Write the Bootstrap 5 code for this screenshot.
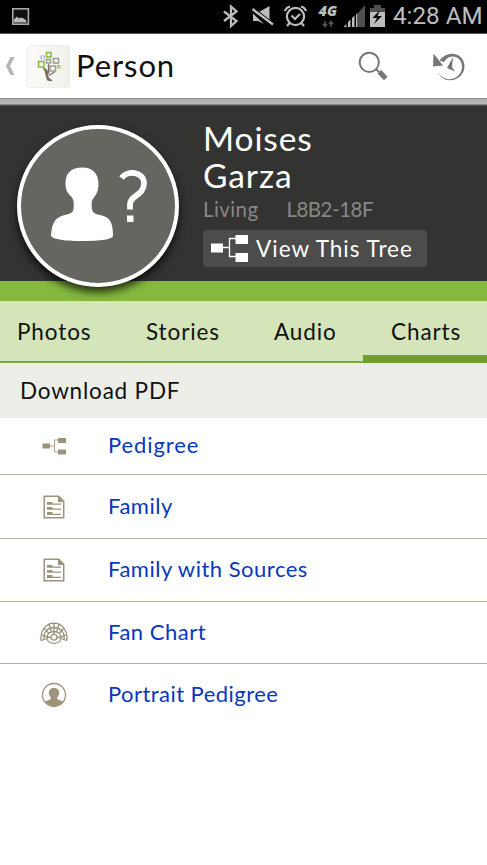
<!DOCTYPE html>
<html lang="en">
<head>
<meta charset="utf-8">
<meta name="viewport" content="width=device-width, initial-scale=1">
<title>Person</title>
<link href="https://cdn.jsdelivr.net/npm/bootstrap@5.3.0/dist/css/bootstrap.min.css" rel="stylesheet">
<style>
body{font-family:Lato,"Open Sans",sans-serif;font-size:22.5px;line-height:30px;color:#111;background:#fff;height:865px;overflow:hidden}
svg{display:block;flex:none}
.status-bar{height:34px;background:#000;border-bottom:1px solid #555}
.clock{font:24.2px/32px Roboto,sans-serif;color:#bebebe;white-space:nowrap;margin-left:8px}
.app-bar{height:64px;background:#fff}
.app-title{font-size:31px;line-height:62px;letter-spacing:.9px;margin-left:5px}
.strip{height:8px;background:linear-gradient(#8d8e8a 0 1px,#aaaba6 1px,#bbbcb7 6px,#51524e 7px)}
.hero{height:175px;background:#333331}
.avatar{width:162px;height:162px;margin:19px 0 0 17px;border:4px solid #fff;background:#666661;box-shadow:0 5px 9px rgba(0,0,0,.75);z-index:2}
.facts{margin:14px 0 0 24px}
.full-name{font-size:33.5px;line-height:37px;letter-spacing:.9px;color:#fff}
.meta{font-size:20.5px;line-height:30px;color:#888885;letter-spacing:.4px;gap:28px}
.person-id{letter-spacing:-.5px}
.tree-btn{width:224px;height:37px;background:#4c4c4b;color:#fff;border-radius:4px;margin-top:6px;letter-spacing:1px;line-height:37px;white-space:nowrap}
.accent{height:20px;background:#85b83f}
.tab-row{height:62px;background:#d4e5b9;border-bottom:2px solid #76ac37;letter-spacing:.9px}
.tab-row .nav-link{color:#111;padding:0;line-height:62px;height:60px;white-space:nowrap}
.tab-row .nav-item:nth-child(1){width:146px;padding-left:17px}
.tab-row .nav-item:nth-child(2){width:128px}
.tab-row .nav-item:nth-child(3){width:89px}
.tab-row .nav-item:nth-child(4){width:124px;height:62px;padding-left:28px;background:linear-gradient(transparent 54px,#6fa02d 54px)}
.section-head{height:55px;background:#eeeee9;padding-left:20px;line-height:55px;letter-spacing:.8px}
.chart-row{height:63px;border-bottom:1px solid #b8b19f;padding-left:40px;color:#0738bd;font-size:22px;letter-spacing:.5px;text-decoration:none}
.chart-row svg{margin-right:40px}
.chart-row span{padding-bottom:2px}
.h57{height:57px;letter-spacing:.9px}.h64{height:64px}.h62{height:62px}
.last-row{height:62px;letter-spacing:.45px}
</style>
<script src="https://cdn.jsdelivr.net/npm/bootstrap@5.3.0/dist/js/bootstrap.bundle.min.js"></script>
</head>
<body>
<div class="status-bar d-flex">
<svg width="223" height="33" viewBox="0 0 223 33"><rect x="12.8" y="8.8" width="15.6" height="15.4" fill="#111" stroke="#aaa" stroke-width="1.6"/><path d="M14 22.5v-3l3-3 2 2 2-1 3 1 2.500 2.500v1.500z" fill="#bbb"/></svg>
<svg width="162" height="33" viewBox="223 0 162 33" fill="#bdbdbd">
<path d="M224 11.500l12.500 9.500-5.500 5V6.500l5.500 5L224 21" fill="none" stroke="#bdbdbd" stroke-width="2.300"/>
<path d="M253 12h6l10.500-6v16.500h-1L253 12zM253 13.500v7.500h5l6 3z"/><path d="M251.500 8.500L273 25" stroke="#000" stroke-width="4.500"/><path d="M252.500 9L273 24.500" stroke="#bdbdbd" stroke-width="2.400"/>
<g fill="none" stroke="#bdbdbd" stroke-width="2.200"><circle cx="295.500" cy="16.500" r="8.600"/><path d="M291.500 15.500l3.500 3.500 5-5M285 11a7 7 0 0 1 5-4.500M301 6.500a7 7 0 0 1 5 4.500M289.500 23l-2.500 3M301.500 23l2.500 3"/></g>
<text x="318.500" y="16" font-family="Open Sans, sans-serif" font-size="13.500" font-weight="800" font-style="italic" textLength="18.500" lengthAdjust="spacingAndGlyphs">4G</text>
<path d="M325 21v5M323 24l2 2.500 2-2.500M331 27v-5M329 24l2-2.500 2 2.500" fill="none" stroke="#555" stroke-width="1.600"/>
<path d="M343.500 27l3-3v3zM348 27v-5l2.500-2.500V27zM352 27v-9l2.500-2.500V27z M356 27V14.500l1.500-1.500V27z"/><path d="M358 27V13l7-8v22z" fill="#505050"/>
<path d="M370 8h4V5h7v3h4v4.500h-15z" fill="#505050"/><path d="M370 12h15v15h-15z"/><path d="M380 10l-7.500 8h4.500l-3 6 8-8h-4.500z" fill="#000"/>
</svg>
<span class="clock">4:28 AM</span>
</div>
<header class="app-bar d-flex">
<svg width="71" height="64" viewBox="0 34 71 64">
<path d="M10.500 57h4L10 66l4.500 9h-4L6 66z" fill="#b4b4b4"/>
<defs><linearGradient id="tile" x2="1"><stop stop-color="#fbfbf9"/><stop offset="1" stop-color="#f1f0eb"/></linearGradient></defs>
<rect x="27.500" y="45.500" width="42" height="42" rx="2.500" fill="url(#tile)" stroke="#eeeeea"/>
<path d="M43.500 68c4 2 4 4 4 7 .5 3 1.500 4.500 4.500 5.500l-4-.3c-3-3-.5-8-4.500-12.200M48.500 64v10M55 71.500l-6 4" fill="#786f60" stroke="#786f60" stroke-width="1.300"/>
<g fill="#f7f7f4" stroke-width="1.500"><g stroke="#84b941"><path d="M46.500 52.500h4.500v4.500h-4.500zM38.500 61.500h5.500v5.500h-5.500z"/><path d="M57.500 65.500h2.500v2.500h-2.500z" stroke-width="1"/></g><path d="M41 56h3.500v3h-3.500z" stroke="#bbb" stroke-width="1.200"/><path d="M46.500 59.500h4v3.500h-4zM53.500 58.500h5v4.500h-5zM50 66h5.500v5h-5.500z" stroke="#9d9b95"/></g>
</svg>
<span class="app-title">Person</span>
<svg class="ms-auto" width="129" height="64" viewBox="358 34 129 64">
<circle cx="369.300" cy="62.300" r="9.600" fill="none" stroke="#777" stroke-width="2"/><path d="M376 69l3 3" stroke="#777" stroke-width="2"/><path d="M379.300 71.800l6.500 6.700" stroke="#777" stroke-width="5"/>
<path d="M439.500 60.500C447 49.500 464 52 464.500 66c0 9-7.500 14.500-15 14.200-5 0-9.500-3-11.300-8 3 5 7 7 11.300 7 7.500-.3 12.500-5.700 12.500-12.700 0-10-12-14.500-18-4.500z" fill="#777"/><path d="M433.500 53.500l-.5 13 10-1z" fill="#777"/><path d="M453 57l-1 10 3 4.500-8-3.500z" fill="#777"/>
</svg>
</header>
<div class="strip"></div>
<section class="hero d-flex align-items-start">
<div class="avatar rounded-circle position-relative flex-shrink-0"><svg width="154" height="154" viewBox="21 129 154 154" fill="#fff"><path d="M82 167.500c11 0 16 6 16.500 16 0 7-2 11-4.500 14-3 3-2.500 6-2 12 1 4 5 5 10 6 8 2 11 7 11 20 0 4-12 5.500-31 5.500S51 239 51 235c1-12 4-17 12-19.500 5-1.500 10-2 10.500-6.500.5-6 .5-9-2-12-4-4-6-7-6-14 0-10 6-15.500 16.500-15.500z"/><path d="M121.500 178c5.500-8 22.500-7 22.500 5.500 0 12-14 12-14 21v5" fill="none" stroke="#fff" stroke-width="5.800"/><path d="M127 215.500h6.500v6.500H127z"/></svg></div>
<div class="facts">
<div class="full-name"><div>Moises</div><div>Garza</div></div>
<div class="meta d-flex"><span>Living</span><span class="person-id">L8B2-18F</span></div>
<a class="tree-btn d-flex text-decoration-none" href="#"><svg width="53" height="37" viewBox="203 230 53 37"><path d="M222 247.500h8M238 238.500h-8.500v18h8.500" fill="none" stroke="#fff" stroke-width="1.300"/><path d="M211 243.500h12v9h-12zM235.500 235h12.500v9h-12.500zM235.500 253h12.500v9h-12.500z" fill="#fff"/></svg><span>View This Tree</span></a>
</div>
</section>
<div class="accent"></div>
<ul class="tab-row nav flex-nowrap">
<li class="nav-item"><a class="nav-link" href="#">Photos</a></li><li class="nav-item"><a class="nav-link" href="#">Stories</a></li><li class="nav-item"><a class="nav-link" href="#">Audio</a></li><li class="nav-item"><a class="nav-link active" href="#">Charts</a></li>
</ul>
<div class="section-head"><span>Download PDF</span></div>
<nav>
<a class="chart-row h57 d-flex align-items-center" href="#"><svg width="28" height="28" viewBox="0 0 28 28" fill="#9c937a"><path d="M10 14h4M18 8h-3.500v12H18" fill="none" stroke="#aaa38f"/><path d="M2.500 11.500h7.500v5H2.500zM18 6h8v5h-8zM18 17.500h8v5h-8z"/></svg><span>Pedigree</span></a>
<a class="chart-row h64 d-flex align-items-center" href="#"><svg width="28" height="28" viewBox="0 0 28 28" fill="#9c937a"><path d="M4.200 3.200h14.500l5 5v16.600H4.200z" fill="none" stroke="#9c937a" stroke-width="1.500"/><path d="M18 3l6 6h-6zM7 9h5.500v1.500H21v1.200H7zM7 14h5.500v1.500H21v1.200H7zM7 19h5.500v1.800H21V22H7z"/></svg><span>Family</span></a>
<a class="chart-row d-flex align-items-center" href="#"><svg width="28" height="28" viewBox="0 0 28 28" fill="#9c937a"><path d="M4.200 3.200h14.500l5 5v16.600H4.200z" fill="none" stroke="#9c937a" stroke-width="1.500"/><path d="M18 3l6 6h-6zM7 9h5.500v1.500H21v1.200H7zM7 14h5.500v1.500H21v1.200H7zM7 19h5.500v1.800H21V22H7z"/></svg><span>Family with Sources</span></a>
<a class="chart-row h62 d-flex align-items-center" href="#"><svg width="28" height="28" viewBox="0 0 28 28" fill="none" stroke="#9c937a" stroke-width="1.300"><path d="M7.200 19.500l-6 2C-.5 12 6 4.200 14 4.200S28.500 12 26.800 21.500l-6-2M4 20.500C3 13 8 8.500 14 8.500S25 13 24 20.500M7.200 19.500C6.500 15 10 12.500 14 12.500s7.500 2.500 6.800 7C20 26 8 26 7.200 19.500zM14 4.500v11M9 5.500l2.500 7.500M19 5.500l-2.500 7.500M4.500 9.500l4.500 5M23.500 9.500l-4.500 5M1 15.500l6 2.500 4 .5M27 15.500L21 18l-4 .5"/><circle cx="14" cy="18.300" r="2.900"/></svg><span>Fan Chart</span></a>
<a class="chart-row last-row border-0 d-flex align-items-center" href="#"><svg width="28" height="28" viewBox="0 0 28 28" fill="#9c937a"><circle cx="14" cy="14" r="11.500" fill="none" stroke="#9c937a" stroke-width="1.300"/><path d="M14 7c4 0 5.500 2.500 5 6-.3 2-1.500 2.500-2 4 .3 2.500 4.500 2 6 4-4 5.500-14 5.500-18 0 1.500-2 5.700-1.500 6-4-.5-1.500-1.700-2-2-4C8.500 9.500 10 7 14 7z"/></svg><span>Portrait Pedigree</span></a>
</nav>
</body>
</html>
